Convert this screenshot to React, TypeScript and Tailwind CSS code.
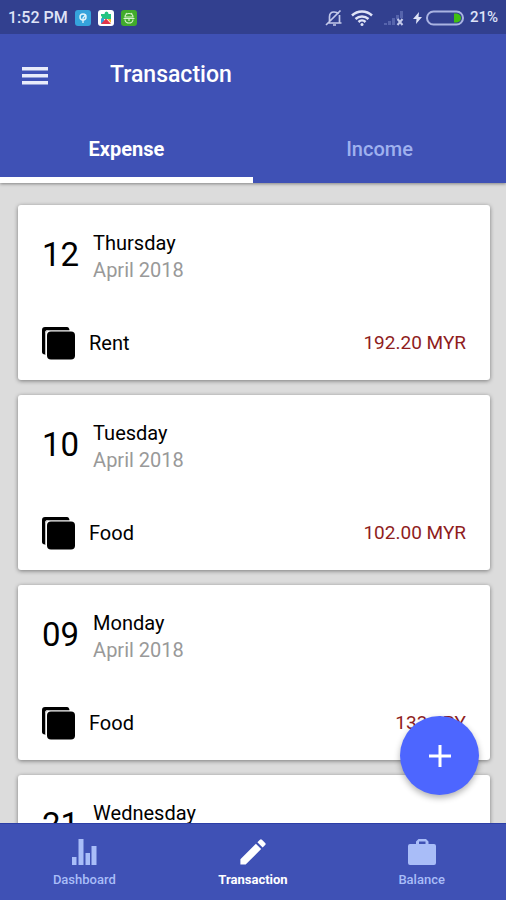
import React, { useState } from "react";

type IconProps = { className?: string };

const TABS = ["Expense", "Income"];

const TRANSACTIONS = [
  { day: "12", weekday: "Thursday", month: "April 2018", category: "Rent", amount: "192.20 MYR" },
  { day: "10", weekday: "Tuesday", month: "April 2018", category: "Food", amount: "102.00 MYR" },
  { day: "09", weekday: "Monday", month: "April 2018", category: "Food", amount: "133 JPY" },
  { day: "21", weekday: "Wednesday", month: "", category: "", amount: "" },
];

const NAV_ITEMS = [
  { label: "Dashboard", Icon: ChartIcon },
  { label: "Transaction", Icon: PencilIcon },
  { label: "Balance", Icon: BriefcaseIcon },
];

function ChartIcon({ className }: IconProps) {
  return (
    <svg viewBox="0 0 28 28" fill="currentColor" className={className} aria-hidden="true">
      <path d="M2 19h4.500v8H2zM8.500 1h5v26h-5zM15.500 15H20v12h-4.500zM21.500 8h5v19h-5z" />
    </svg>
  );
}

function PencilIcon({ className }: IconProps) {
  return (
    <svg viewBox="2 2 20 20" fill="currentColor" className={className} aria-hidden="true">
      <path d="M3 17.25V21h3.75L17.81 9.94l-3.75-3.75L3 17.25zM20.71 7.04a1 1 0 0 0 0-1.41l-2.34-2.34a1 1 0 0 0-1.41 0l-1.83 1.83 3.75 3.75 1.83-1.83z" />
    </svg>
  );
}

function BriefcaseIcon({ className }: IconProps) {
  return (
    <svg viewBox="0 0 28 28" fill="currentColor" className={className} aria-hidden="true">
      <path
        fillRule="evenodd"
        d="M8 6V3.500L10.500 1h7.500l2.500 2.500V6H26q2 0 2 2v17q0 2-2 2H2q-2 0-2-2V8q0-2 2-2zM11 6h6.500V3.500H11z"
      />
    </svg>
  );
}

function StackIcon({ className }: IconProps) {
  return (
    <svg viewBox="0 0 33 33" className={className} aria-hidden="true">
      <path d="M3 0h22q2 0 2.500 3H6Q3 3 3 6v21.500Q0 27 0 25V3q0-3 3-3z" />
      <path d="M3.500 28V6Q3.500 3.500 6 3.500h21.500" fill="none" stroke="#bbb" />
      <rect x="5" y="4.500" width="28" height="28" rx="4" />
    </svg>
  );
}

function StatusBar() {
  return (
    <div className="flex h-[34px] items-center justify-between bg-[#32408f] px-2 pt-px text-[#dfe3f7]">
      <div className="flex items-center gap-[7px]">
        <span className="text-base font-medium">1:52 PM</span>
        <svg viewBox="0 0 16 16" className="size-4" aria-hidden="true">
          <rect width="16" height="16" rx="3" fill="#35a3dc" />
          <circle cx="8" cy="7" r="3" fill="none" stroke="#dff3fc" strokeWidth="1.500" />
          <path d="M8 13V8l3-3.500" fill="none" stroke="#dff3fc" strokeWidth="1.300" />
        </svg>
        <svg viewBox="0 0 16 16" className="size-4" aria-hidden="true">
          <rect width="16" height="16" rx="3" fill="#fff" />
          <path d="M3 4h3.500q0-2.500 2-2.500t2 2.500H13v5H3q2-2 0-3z" fill="#25c481" />
          <path d="M3 9l3-1.500v5L3 14z" fill="#35a3dc" />
          <path d="M3 14l5-5.500 5 5.500z" fill="#e2344a" />
          <path d="M9.500 9H13v4z" fill="#f3b52c" />
        </svg>
        <svg viewBox="0 0 16 16" className="size-4" aria-hidden="true">
          <rect width="16" height="16" rx="3" fill="#41ab2c" />
          <path
            d="M4 7a4 3.500 0 0 1 8 0zM2.500 8.500h11M4 9.500a4 3.500 0 0 0 8 0M8 9v2M5 3l1 1.500M11 3l-1 1.500"
            fill="none"
            stroke="#d6f3cc"
            strokeWidth="1.200"
          />
        </svg>
      </div>
      <div className="flex items-center">
        <svg viewBox="0 0 18 18" className="mr-2 size-[18px]" fill="none" stroke="#c3c9ea" strokeWidth="1.700" aria-hidden="true">
          <path d="M3 14h13.500M4.500 13V8q0-5 4.500-5 3 0 4.500 2M14.500 6v8M8 16h3M1 16L15.500 1.500" />
        </svg>
        <svg viewBox="0 0 22 18" className="mr-2.5 h-[18px] w-[22px]" fill="none" stroke="#dfe3f7" strokeWidth="2.500" aria-hidden="true">
          <path d="M1 6.500a14.500 14.500 0 0 1 20 0M4.500 10a9.500 9.500 0 0 1 13 0M7.500 13a5 5 0 0 1 7 0" />
          <circle cx="11" cy="15.500" r="1.500" fill="#dfe3f7" stroke="none" />
        </svg>
        <svg viewBox="0 0 22 16" className="mr-2 h-4 w-[22px]" aria-hidden="true">
          <path d="M1 13h3v2H1zM5 11h3v4H5zM9 8h3v7H9zM13 5h3v4h-3zM17 1h3v7h-3z" fill="#5664ac" />
          <path d="M14.500 9l5 6M19.500 9l-5 6" stroke="#c3c9ea" strokeWidth="2" />
        </svg>
        <svg viewBox="0 0 9 14" className="mr-1 h-3.5 w-[9px]" fill="#dfe3f7" aria-hidden="true">
          <path d="M6 1L0 8h3.500L3 13l6-7H5.500z" />
        </svg>
        <svg viewBox="0 0 38 16" className="mr-1.5 h-4 w-[38px]" aria-hidden="true">
          <rect x="1" y="1.500" width="36" height="13" rx="6.500" fill="none" stroke="#aab3e2" strokeWidth="2" />
          <path d="M28 3.500h3q4 1 4 4.500t-4 4.500h-3z" fill="#40c010" />
        </svg>
        <span className="text-[15px] font-medium">21%</span>
      </div>
    </div>
  );
}

export default function App() {
  const [tab, setTab] = useState("Expense");
  const [page, setPage] = useState("Transaction");

  return (
    <div className="flex h-screen flex-col overflow-hidden bg-[#dcdcdc] font-['Roboto',sans-serif] text-black">
      <header className="relative z-10 bg-[#3f51b5] text-white shadow-[0_1px_3px_rgba(0,0,0,0.4)]">
        <StatusBar />
        <div className="flex h-[83px] items-center px-[22px]">
          <button type="button" aria-label="Open menu" className="mr-[62px] cursor-pointer">
            <svg viewBox="0 0 26 20" className="h-5 w-[26px]" fill="#e8ebfa" aria-hidden="true">
              <path d="M0 1h26v3.500H0zM0 8h26v3.500H0zM0 15h26v3.500H0z" />
            </svg>
          </button>
          <h1 className="text-[23px] font-medium">Transaction</h1>
        </div>
        <nav className="flex">
          {TABS.map((name) => (
            <button
              key={name}
              type="button"
              onClick={() => setTab(name)}
              className={`h-[66px] flex-1 cursor-pointer border-b-[6px] pt-1 text-xl ${
                tab === name
                  ? "border-white font-bold text-white"
                  : "border-transparent font-medium text-[#9fb1ef]"
              }`}
            >
              {name}
            </button>
          ))}
        </nav>
      </header>

      <main className="flex min-h-0 flex-1 flex-col gap-[15px] overflow-hidden pt-[22px] pr-4 pl-[18px]">
        {TRANSACTIONS.map((item) => (
          <article
            key={item.day}
            className="flex min-h-[175px] shrink-0 flex-col gap-[39px] rounded-[3px] bg-white px-6 pt-[25px] shadow-[0_1px_4px_rgba(0,0,0,0.45)]"
          >
            <div className="flex items-start gap-[14px]">
              <span className="text-[33px] leading-[50px]">{item.day}</span>
              <div className="text-xl leading-[27px]">
                <p>{item.weekday}</p>
                <p className="min-h-[27px] text-[#999]">{item.month}</p>
              </div>
            </div>
            {item.category && (
              <div className="flex items-center text-xl leading-10">
                <StackIcon className="mr-[14px] size-[33px]" />
                <span>{item.category}</span>
                <span className="ml-auto text-[19px] text-[#8f1d1d]">{item.amount}</span>
              </div>
            )}
          </article>
        ))}
      </main>

      <button
        type="button"
        aria-label="Add transaction"
        className="fixed right-[27px] bottom-[105px] z-20 flex size-[79px] cursor-pointer items-center justify-center rounded-full bg-[#4d66ff] text-white shadow-[0_3px_6px_rgba(0,0,0,0.3)]"
      >
        <svg viewBox="0 0 22 22" className="size-[22px]" fill="currentColor" aria-hidden="true">
          <path d="M9.500 0h3v9.500H22v3h-9.500V22h-3v-9.500H0v-3h9.500z" />
        </svg>
      </button>

      <nav className="relative z-10 flex h-[77px] border-t border-[#2c3ea6] bg-[#3f51b5]">
        {NAV_ITEMS.map(({ label, Icon }) => (
          <button
            key={label}
            type="button"
            onClick={() => setPage(label)}
            className={`flex flex-1 cursor-pointer flex-col items-center justify-center gap-1 pt-1 text-[13px] leading-5 ${
              page === label ? "font-bold text-white" : "font-medium text-[#a9bdf8]"
            }`}
          >
            <Icon className="size-7" />
            {label}
          </button>
        ))}
      </nav>
    </div>
  );
}
